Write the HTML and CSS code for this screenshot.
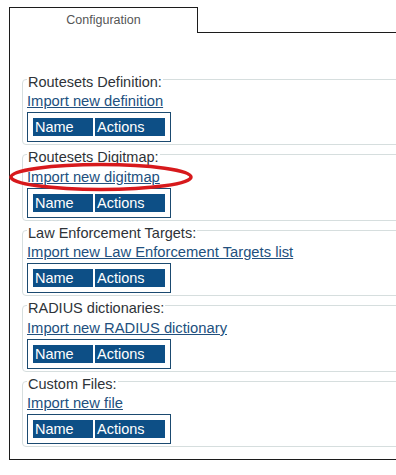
FILE: index.html
```html
<!DOCTYPE html>
<html lang="en">
<head>
  <meta charset="UTF-8">
  <title>Configuration</title>
  <link rel="stylesheet" href="styles.css">
</head>
<body>
  <div class="wrapper">
    <div class="tabs">
      <div class="tab">Configuration</div>
      <div class="tab-rest"></div>
    </div>

    <div class="panel">
      <fieldset class="group">
        <legend>Routesets Definition:</legend>
        <a href="#">Import new definition</a>
        <div class="grid">
          <div class="cell name">Name</div>
          <div class="cell actions">Actions</div>
        </div>
      </fieldset>

      <fieldset class="group">
        <legend>Routesets Digitmap:</legend>
        <a href="#">Import new digitmap</a>
        <div class="grid">
          <div class="cell name">Name</div>
          <div class="cell actions">Actions</div>
        </div>
      </fieldset>

      <fieldset class="group">
        <legend>Law Enforcement Targets:</legend>
        <a href="#">Import new Law Enforcement Targets list</a>
        <div class="grid">
          <div class="cell name">Name</div>
          <div class="cell actions">Actions</div>
        </div>
      </fieldset>

      <fieldset class="group">
        <legend>RADIUS dictionaries:</legend>
        <a href="#">Import new RADIUS dictionary</a>
        <div class="grid">
          <div class="cell name">Name</div>
          <div class="cell actions">Actions</div>
        </div>
      </fieldset>

      <fieldset class="group">
        <legend>Custom Files:</legend>
        <a href="#">Import new file</a>
        <div class="grid">
          <div class="cell name">Name</div>
          <div class="cell actions">Actions</div>
        </div>
      </fieldset>
    </div>

    <!-- red annotation around the digitmap link -->
    <svg class="mark" width="186" height="30" viewBox="0 0 186 30">
      <ellipse cx="93" cy="15" rx="90" ry="12.5" fill="none" stroke="#d7191c" stroke-width="3.5"/>
    </svg>
  </div>
</body>
</html>
```

FILE: styles.css
```css
:root {
  --line: #1c1c1c;
  --box: #d6dede;
  --blue: #0d4f86;
  --blue-dark: #1b4a70;
  --link: #22507e;
  --text: #2e3338;
}

* {
  box-sizing: border-box;
}

html, body {
  overflow: hidden;
}

body {
  margin: 0;
  background-color: white;
  font-family: 'Liberation Sans', Arial, sans-serif;
  color: var(--text);
}

.wrapper {
  position: relative;
  width: 440px;
  padding: 7px 0 0 9px;
}

.tabs {
  display: flex;
}

.tab {
  width: 189px;
  height: 26px;
  border: 1px solid var(--line);
  border-bottom: none;
  text-align: center;
  font-size: 12.5px;
  color: #555;
  padding-top: 5px;
}

.tab-rest {
  flex: 1;
  border-bottom: 1px solid var(--line);
}

.panel {
  border-left: 1px solid var(--line);
  border-bottom: 1px solid var(--line);
  padding: 36.5px 0 12px 12px;
}

.group {
  margin: 0;
  padding: 3.5px 4px 2px;
  border: 1px solid var(--box);
  border-radius: 4px;
  font-size: 14.75px;
  line-height: 18px;
}

.group legend {
  padding: 5px 1px 0;
  font-size: 14.5px;
  line-height: 14px;
}

.group a {
  display: block;
  color: var(--link);
  margin-bottom: 2px;
}

.grid {
  display: flex;
  gap: 2px;
  width: 144px;
  padding: 5px;
  border: 1px solid var(--blue-dark);
}

.cell {
  background-color: var(--blue);
  color: white;
  height: 18px;
  padding-left: 2px;
  font-size: 14.5px;
  line-height: 18px;
}

.cell.name {
  width: 60px;
}

.cell.actions {
  width: 70px;
}

.mark {
  position: absolute;
  left: 8px;
  top: 162px;
}
```
